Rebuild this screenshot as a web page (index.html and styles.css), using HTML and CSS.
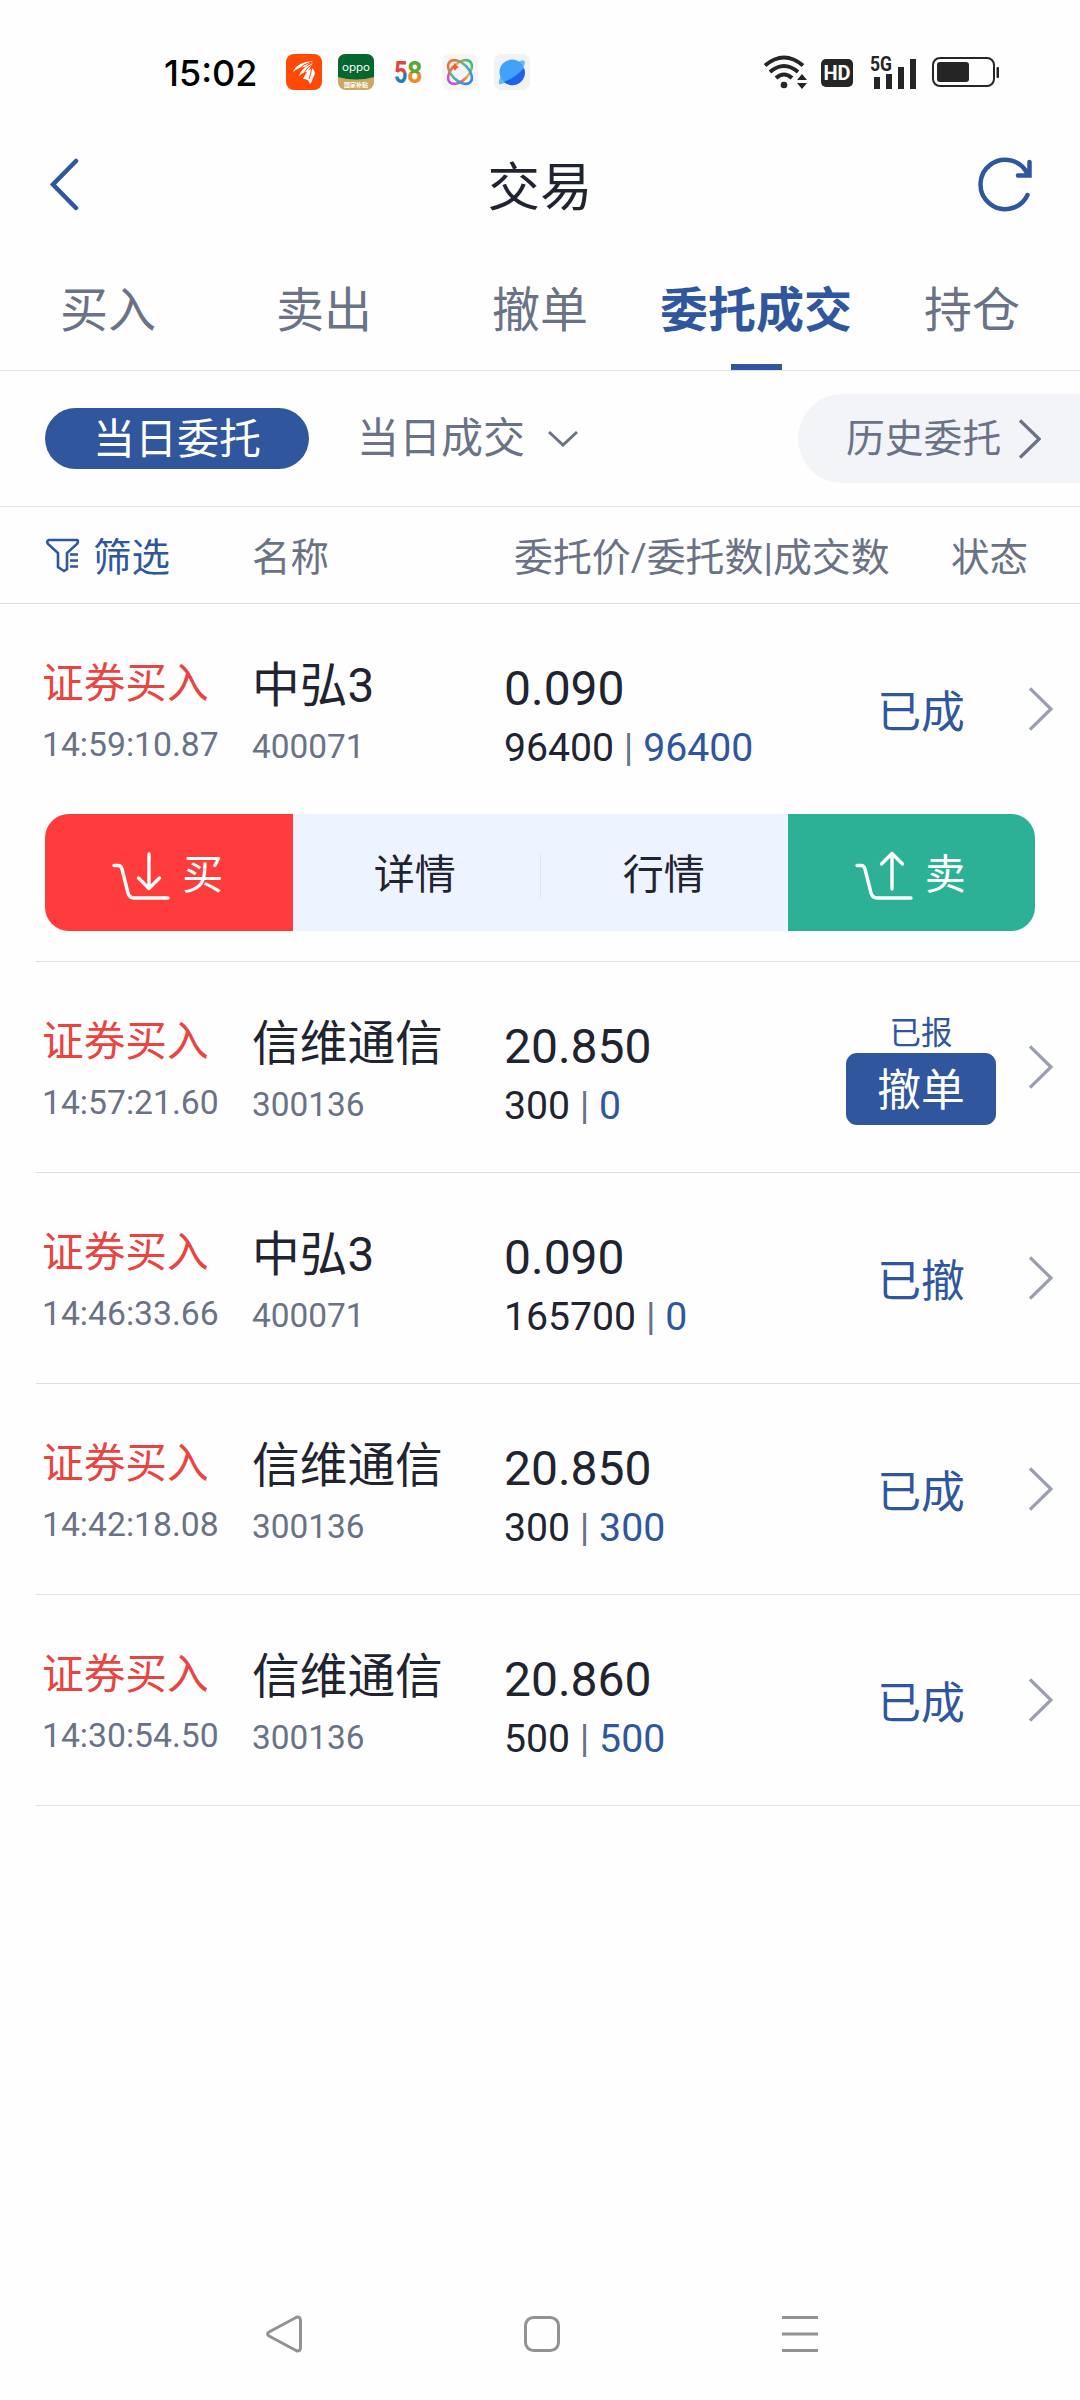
FILE: index.html
```
<!doctype html>
<html lang="zh-CN">
  <head>
    <title>交易</title>
    <meta charset="utf-8" />
    <link rel="stylesheet" href="styles.css">
  </head>
  <body>
    <svg class="defs">
      <symbol id="chevron" viewBox="0 0 24 44">
        <path d="M1 1.5L22 22L1 42.5" />
      </symbol>
    </svg>

    <div class="statusbar">
      <span class="time">15:02</span>
      <div class="apps">
        <svg width="36" height="36" viewBox="0 0 36 36">
          <rect width="36" height="36" rx="8" fill="#ff4a05" />
          <path d="M7 18Q11 8 27 7Q22 10 19 13Q13 13 7 18ZM13 22Q15 14 27 9Q24 13 22 18Q17 18 13 22ZM17 25Q20 18 26 14Q31 18 27 24Q26 28 24 30L22 26Q20 25 17 25Z" fill="#fff" />
          <path d="M12 16Q17 10 25 8M18 19Q21 13 27 10M23 25Q25 19 26 13" fill="none" stroke="#ff4a05" />
        </svg>
        <svg width="36" height="36" viewBox="0 0 36 36">
          <rect width="36" height="36" rx="8" fill="#cda762" />
          <path d="M0 23V8Q0 0 8 0H28Q36 0 36 8V23Q18 28 0 23Z" fill="#03682f" />
          <text class="oppo" x="18" y="17" textLength="28" lengthAdjust="spacingAndGlyphs">oppo</text>
          <text class="subsidy" x="18" y="33" textLength="24">国家补贴</text>
        </svg>
        <svg width="36" height="36" viewBox="0 0 36 36">
          <defs>
            <linearGradient id="five" x1="0" y1="0" x2="0" y2="1">
              <stop offset="0.5" stop-color="#e4433a" />
              <stop offset="0.5" stop-color="#1f7fc4" />
            </linearGradient>
            <linearGradient id="eight" x1="0" y1="0" x2="0" y2="1">
              <stop offset="0.52" stop-color="#5aa832" />
              <stop offset="0.52" stop-color="#f08a22" />
            </linearGradient>
          </defs>
          <text class="digit" x="4" y="29" textLength="13.500" lengthAdjust="spacingAndGlyphs" fill="url(#five)">5</text>
          <text class="digit" x="17" y="29" textLength="15.500" lengthAdjust="spacingAndGlyphs" fill="url(#eight)">8</text>
        </svg>
        <svg width="36" height="36" viewBox="0 0 36 36">
          <defs>
            <linearGradient id="knot" x1="0" y1="0.5" x2="1" y2="0.5">
              <stop offset="0" stop-color="#c34fe8" />
              <stop offset="0.35" stop-color="#f0684c" />
              <stop offset="0.6" stop-color="#eab83c" />
              <stop offset="1" stop-color="#35bd76" />
            </linearGradient>
            <linearGradient id="knot2" x1="0" y1="0.5" x2="1" y2="0.5">
              <stop offset="0" stop-color="#ff6a2b" />
              <stop offset="0.45" stop-color="#49b9a3" />
              <stop offset="1" stop-color="#3685f5" />
            </linearGradient>
          </defs>
          <rect width="36" height="36" rx="8" fill="#f5f4f6" />
          <g fill="none" stroke-width="2.6">
            <ellipse cx="18" cy="18" rx="14.500" ry="8.500" transform="rotate(-45 18 18)" stroke="url(#knot)" />
            <ellipse cx="18" cy="18" rx="14.500" ry="8.500" transform="rotate(45 18 18)" stroke="url(#knot2)" />
          </g>
          <path d="M13 9l1.400 2.600 2.600 1.400-2.600 1.400L13 17l-1.400-2.600L9 13l2.600-1.400Z" fill="#f35b31" />
        </svg>
        <svg width="36" height="36" viewBox="0 0 36 36">
          <rect width="36" height="36" rx="8" fill="#f1f2f4" />
          <path d="M5 30Q4 26 8 21L26 7Q30 5 31 8Q31 11 29 14L10 29Q6 31 5 30Z" fill="#65b7fb" />
          <circle cx="18" cy="18" r="12.500" fill="#42a1fb" />
          <path d="M30 14A12.500 12.500 0 0 1 10 28Q22 23 30 14Z" fill="#1f63ec" />
        </svg>
      </div>
      <div class="signals">
        <svg width="46" height="36" viewBox="0 0 46 36">
          <g fill="none" stroke="#252525" stroke-width="4">
            <path d="M2 11.500Q21 -4.500 40 11.500" />
            <path d="M7 18Q21 6 35 18" />
            <path d="M13 24Q21 17 29 24" />
          </g>
          <circle cx="21" cy="31" r="3.300" fill="#252525" />
          <path d="M34 26l5-6l5 6ZM34 29l5 6l5-6Z" fill="#252525" />
        </svg>
        <span class="hd">HD</span>
        <svg class="cell" width="48" height="38" viewBox="0 -4 48 38">
          <text x="0" y="14" textLength="22" lengthAdjust="spacingAndGlyphs">5G</text>
          <path d="M4 20h6v12h-6ZM16 17h6v15h-6ZM28 10h6v22h-6ZM40 2h6v30h-6Z" />
        </svg>
        <svg width="68" height="32" viewBox="0 0 68 32">
          <rect x="1" y="2" width="61" height="28" rx="7" fill="none" stroke="#252525" stroke-width="2" />
          <rect x="5" y="6" width="32" height="20" rx="3" fill="#252525" />
          <rect x="64.500" y="11" width="2.500" height="11" rx="1" fill="#252525" />
        </svg>
      </div>
    </div>

    <div class="header">
      <svg class="blue-line" width="30" height="54" viewBox="0 0 30 54">
        <path d="M26 3L3 26.500L26 50" />
      </svg>
      <h1>交易</h1>
      <svg class="blue-line" width="58" height="58" viewBox="0 0 58 58">
        <path d="M51.500 39A24.700 24.700 0 1 1 52 19M53.500 6V19.500H42" />
      </svg>
    </div>

    <div class="tabs">
      <div class="tab">买入</div>
      <div class="tab">卖出</div>
      <div class="tab">撤单</div>
      <div class="tab active">委托成交</div>
      <div class="tab">持仓</div>
    </div>

    <div class="filters">
      <div class="pill">当日委托</div>
      <div class="deals">
        当日成交
        <svg width="30" height="18" viewBox="0 0 30 18"><path d="M1 2L15 15L29 2" /></svg>
      </div>
      <div class="history">
        历史委托
        <svg width="22" height="40"><use href="#chevron" /></svg>
      </div>
    </div>

    <div class="columns">
      <div class="sift">
        <svg width="36" height="36" viewBox="0 0 36 36">
          <path d="M4 2H32Q34 3 32 6L22 15V31L19 33L13 29V15L3 6Q1 3 4 2Z" />
          <path d="M25 16.500h8M25 22.500h8M25 28.500h8" />
        </svg>
        筛选
      </div>
      <div>名称</div>
      <div class="col-price">委托价/委托数|成交数</div>
      <div class="col-state">状态</div>
    </div>

    <div class="orders">
      <div class="order">
        <div class="row">
          <div class="side"><b>证券买入</b><small>14:59:10.87</small></div>
          <div class="stock"><b>中弘3</b><small>400071</small></div>
          <div class="price"><b>0.090</b><small>96400 <i>|</i> <em>96400</em></small></div>
          <div class="state">已成</div>
          <svg class="more" width="24" height="44"><use href="#chevron" /></svg>
        </div>
        <div class="actions">
          <div class="buy">
            <svg width="60" height="52" viewBox="0 0 60 52">
              <path d="M3 15.500h4c2.500 0 3.500 1.500 4 3.500l6 24c1 3.500 2.500 5 6 5h34M38 4V38M27.500 28L38 38.500L48.500 28" />
            </svg>
            买
          </div>
          <div class="detail">详情</div>
          <div class="quote">行情</div>
          <div class="sell">
            <svg width="60" height="52" viewBox="0 0 60 52">
              <path d="M3 15.500h4c2.500 0 3.500 1.500 4 3.500l6 24c1 3.500 2.500 5 6 5h34M38 39V4M27.500 14L38 3.500L48.500 14" />
            </svg>
            卖
          </div>
        </div>
      </div>

      <div class="order">
        <div class="row">
          <div class="side"><b>证券买入</b><small>14:57:21.60</small></div>
          <div class="stock"><b>信维通信</b><small>300136</small></div>
          <div class="price"><b>20.850</b><small>300 <i>|</i> <em>0</em></small></div>
          <div class="state pending">
            <span>已报</span>
            <div class="cancel">撤单</div>
          </div>
          <svg class="more" width="24" height="44"><use href="#chevron" /></svg>
        </div>
      </div>

      <div class="order">
        <div class="row">
          <div class="side"><b>证券买入</b><small>14:46:33.66</small></div>
          <div class="stock"><b>中弘3</b><small>400071</small></div>
          <div class="price"><b>0.090</b><small>165700 <i>|</i> <em>0</em></small></div>
          <div class="state">已撤</div>
          <svg class="more" width="24" height="44"><use href="#chevron" /></svg>
        </div>
      </div>

      <div class="order">
        <div class="row">
          <div class="side"><b>证券买入</b><small>14:42:18.08</small></div>
          <div class="stock"><b>信维通信</b><small>300136</small></div>
          <div class="price"><b>20.850</b><small>300 <i>|</i> <em>300</em></small></div>
          <div class="state">已成</div>
          <svg class="more" width="24" height="44"><use href="#chevron" /></svg>
        </div>
      </div>

      <div class="order">
        <div class="row">
          <div class="side"><b>证券买入</b><small>14:30:54.50</small></div>
          <div class="stock"><b>信维通信</b><small>300136</small></div>
          <div class="price"><b>20.860</b><small>500 <i>|</i> <em>500</em></small></div>
          <div class="state">已成</div>
          <svg class="more" width="24" height="44"><use href="#chevron" /></svg>
        </div>
      </div>
    </div>

    <div class="navbar">
      <svg width="38" height="38" viewBox="0 0 38 38">
        <path d="M4 17L31 2.500Q35 1 35.500 5V33Q35 37 31 35.500L4 21Q1 19 4 17Z" />
      </svg>
      <svg width="38" height="38" viewBox="0 0 38 38">
        <rect x="2.500" y="2.500" width="33" height="33" rx="8" />
      </svg>
      <svg width="38" height="38" viewBox="0 0 38 38">
        <path d="M1 2.500H37M1 19H37M1 35.500H37" />
      </svg>
    </div>
  </body>
</html>
```
FILE: styles.css
```
* {
  margin: 0;
  padding: 0;
  box-sizing: border-box;
}
body {
  width: 1080px;
  height: 2400px;
  display: flex;
  flex-direction: column;
  background: #fefefe;
  color: #1f2430;
  font-family: Roboto, "Noto Sans CJK SC", sans-serif;
}
svg {
  display: block;
  flex: none;
}
.defs {
  width: 0;
  height: 0;
  overflow: hidden;
}

/* status bar */
.statusbar {
  display: flex;
  align-items: center;
  height: 144px;
  padding: 0 80px 0 164px;
}
.time {
  width: 122px;
  padding-top: 2px;
  font-family: Inter, sans-serif;
  font-size: 36px;
  font-weight: 500;
  line-height: 40px;
  color: #000;
  white-space: nowrap;
}
.apps {
  display: flex;
  gap: 16px;
}
.oppo {
  font: 400 10px Inter, sans-serif;
  fill: #fff;
  text-anchor: middle;
}
.subsidy {
  font: 700 6px "Noto Sans CJK SC", sans-serif;
  fill: #fff;
  text-anchor: middle;
}
.digit {
  font: 700 31px Roboto, sans-serif;
}
.signals {
  display: flex;
  align-items: center;
  margin-left: auto;
}
.hd {
  width: 32px;
  height: 28px;
  margin: 2px 17px 0 12px;
  border-radius: 5px;
  background: #252525;
  color: #fff;
  font-size: 20px;
  font-weight: 700;
  line-height: 29px;
  text-align: center;
}
.cell {
  margin-right: 14px;
  fill: #252525;
  font-size: 21px;
  font-weight: 700;
}

/* title */
.header {
  display: flex;
  align-items: center;
  justify-content: space-between;
  height: 82px;
  padding: 0 46px 0 50px;
}
.header h1 {
  padding: 6px 0 0 24px;
  font-size: 52.5px;
  font-weight: 400;
  line-height: 72px;
}
.blue-line {
  fill: none;
  stroke: #30569e;
  stroke-width: 4.5;
  stroke-linecap: round;
}

.tabs {
  display: flex;
  height: 145px;
  border-bottom: 1px solid #dedfe1;
}
.tab {
  flex: 1;
  display: flex;
  flex-direction: column;
  align-items: center;
  padding-top: 51px;
  font-size: 48px;
  line-height: 68px;
  color: #6a7286;
}
.tab.active {
  color: #30569e;
  font-weight: 700;
}
.tab.active::after {
  content: "";
  width: 51px;
  height: 6px;
  margin-top: auto;
  background: #30569e;
}

.filters {
  display: flex;
  align-items: center;
  height: 136px;
  padding: 0 0 0 45px;
  border-bottom: 1px solid #dedfe1;
  font-size: 42px;
  color: #6a7286;
}
.filters svg {
  fill: none;
  stroke: #6a7286;
  stroke-width: 3;
}
.pill {
  width: 264px;
  height: 61px;
  border-radius: 31px;
  background: #30569e;
  color: #fff;
  line-height: 64px;
  text-align: center;
}
.deals {
  display: flex;
  align-items: center;
  gap: 23px;
  margin-left: 48px;
  line-height: 65px;
}
.history {
  display: flex;
  align-items: center;
  gap: 18px;
  width: 282px;
  height: 89px;
  margin-left: auto;
  padding-left: 48px;
  border-radius: 45px 0 0 45px;
  background: #f3f4f7;
  font-size: 38.8px;
  line-height: 94px;
}
.history svg {
  stroke-width: 3.6;
}

.columns {
  display: grid;
  grid-template-columns: 207px 262px 437px 1fr;
  height: 97px;
  padding-left: 45px;
  border-bottom: 1px solid #dedfe1;
  font-size: 38.5px;
  line-height: 101px;
  color: #6a7286;
  white-space: nowrap;
}
.col-price {
  font-size: 38.9px;
}
.sift {
  display: flex;
  align-items: center;
  gap: 12px;
  color: #30569e;
}
.sift svg {
  margin-top: -3px;
  fill: none;
  stroke: #30569e;
  stroke-width: 2.6;
}

/* order list */
.orders {
  flex: 1;
}
.order {
  margin-left: 36px;
  border-bottom: 1px solid #dedfe1;
}
.row {
  display: grid;
  grid-template-columns: 208px 252px 341px 150px 1fr;
  height: 210px;
  padding-left: 9px;
}
.row b,
.row small {
  display: block;
  font-weight: 400;
  white-space: nowrap;
}
.row small {
  font-size: 33.4px;
  line-height: 40px;
  color: #6a7286;
}
.side {
  padding-top: 56px;
  margin-left: -3px;
}
.side b {
  margin-bottom: 17px;
  font-size: 41.7px;
  line-height: 48px;
  color: #e84441;
}
.side small {
  font-size: 33.7px;
}
.stock {
  padding-top: 54px;
  margin-left: -1px;
}
.stock b {
  margin-bottom: 12px;
  font-size: 47.7px;
  line-height: 57px;
}
.price {
  padding-top: 57px;
  margin-left: -1px;
}
.price b {
  margin-bottom: 7px;
  font-size: 48px;
  line-height: 56px;
}
.price small {
  font-size: 39.2px;
  line-height: 48px;
  color: #1f2430;
}
.price i {
  font-style: normal;
  color: #6a7286;
}
.price em {
  font-style: normal;
  color: #30569e;
}
.state {
  padding-top: 79px;
  font-size: 43.8px;
  line-height: 60px;
  text-align: center;
  color: #30569e;
}
.pending {
  padding-top: 53px;
}
.pending span {
  display: block;
  font-size: 31.5px;
  line-height: 38px;
}
.cancel {
  height: 72px;
  border-radius: 11px;
  background: #30569e;
  color: #fff;
  line-height: 77px;
}
.more {
  margin: 83px 0 0 33px;
  fill: none;
  stroke: #9a9fad;
  stroke-width: 3.2;
}

.actions {
  display: grid;
  grid-template-columns: repeat(4, 1fr);
  width: 990px;
  height: 117px;
  margin: 0 0 30px 9px;
  border-radius: 24px;
  overflow: hidden;
  background: #edf4ff;
  font-size: 41px;
  line-height: 123px;
  text-align: center;
}
.buy,
.sell {
  display: flex;
  align-items: center;
  justify-content: center;
  gap: 11px;
  padding-right: 3px;
  background: #ff3c3c;
  color: #fff;
}
.sell {
  background: #2db196;
}
.detail {
  padding-right: 3px;
}
.actions svg {
  fill: none;
  stroke: #fff;
  stroke-width: 3.4;
  stroke-linecap: round;
  stroke-linejoin: round;
}
.quote {
  background: linear-gradient(#dfe4f0, #dfe4f0) left center / 1px 46px no-repeat;
}

/* system navigation */
.navbar {
  display: flex;
  justify-content: space-between;
  height: 85px;
  padding: 0 261px 0 265px;
}
.navbar svg {
  fill: none;
  stroke: #929292;
  stroke-width: 3;
}
```
